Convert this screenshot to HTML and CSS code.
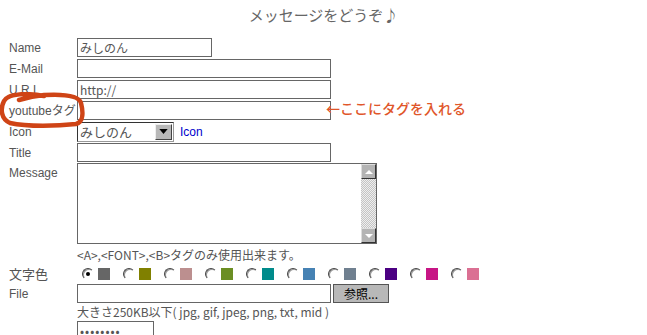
FILE: index.html
```html
<!DOCTYPE html>
<html lang="ja">
  <head>
    <meta charset="UTF-8" />
    <title>メッセージをどうぞ</title>
    <link rel="stylesheet" href="styles.css">
  </head>
  <body>
    <div class="page">
      <h1 class="title">メッセージをどうぞ♪</h1>

      <form class="form">
        <div class="row">
          <label class="label">Name</label>
          <input class="field field-name" type="text" value="みしのん" />
        </div>
        <div class="row">
          <label class="label">E-Mail</label>
          <input class="field" type="text" />
        </div>
        <div class="row">
          <label class="label">U R L</label>
          <input class="field" type="text" value="http://" />
        </div>
        <div class="row">
          <label class="label">youtubeタグ</label>
          <input class="field" type="text" />
        </div>
        <div class="row">
          <label class="label">Icon</label>
          <div class="select">
            <span class="select-text">みしのん</span>
            <span class="select-btn">
              <svg viewBox="0 0 10 6" width="9" height="5"><path d="M0 0h10L5 6z" fill="#000"/></svg>
            </span>
          </div>
          <a class="icon-link" href="#">Icon</a>
        </div>
        <div class="row">
          <label class="label">Title</label>
          <input class="field" type="text" />
        </div>
        <div class="row row-msg">
          <label class="label">Message</label>
          <div class="message">
            <textarea class="message-text"></textarea>
            <div class="scrollbar">
              <span class="sb-btn">
                <svg viewBox="0 0 8 4" width="8" height="4"><path d="M0 4h8L4 0z" fill="#fff"/></svg>
              </span>
              <span class="sb-track"></span>
              <span class="sb-btn">
                <svg viewBox="0 0 8 4" width="8" height="4"><path d="M0 0h8L4 4z" fill="#fff"/></svg>
              </span>
            </div>
          </div>
        </div>
        <div class="note">&lt;A&gt;,&lt;FONT&gt;,&lt;B&gt;タグのみ使用出来ます。</div>
        <div class="row row-color">
          <label class="label label-ja">文字色</label>
          <div class="colors">
            <span class="radio checked"></span><span class="swatch" style="background:#666666"></span>
            <span class="radio"></span><span class="swatch" style="background:#808000"></span>
            <span class="radio"></span><span class="swatch" style="background:#bc8f8f"></span>
            <span class="radio"></span><span class="swatch" style="background:#6b8e23"></span>
            <span class="radio"></span><span class="swatch" style="background:#008b8b"></span>
            <span class="radio"></span><span class="swatch" style="background:#4682b4"></span>
            <span class="radio"></span><span class="swatch" style="background:#708090"></span>
            <span class="radio"></span><span class="swatch" style="background:#4b0082"></span>
            <span class="radio"></span><span class="swatch" style="background:#c71585"></span>
            <span class="radio"></span><span class="swatch" style="background:#db7093"></span>
          </div>
        </div>
        <div class="row">
          <label class="label">File</label>
          <input class="field" type="text" />
          <button class="browse" type="button">参照...</button>
        </div>
        <div class="note note-size">大きさ250KB以下( jpg, gif, jpeg, png, txt, mid )</div>
        <div class="row">
          <span class="label"></span>
          <input class="field field-pass" type="password" value="aaaaaaaa" />
        </div>
      </form>

      <!-- annotation drawn over the screenshot -->
      <svg class="circle-mark" viewBox="0 0 86 36" width="86" height="36">
        <path d="M44 4 C 28 1, 8 1, 4 9 C 0 17, 1 27, 10 31 C 28 35, 58 34, 76 32 C 84 30, 83 19, 81 11 C 79 3, 62 2, 44 3 C 34 4, 26 6, 19 8"
              fill="none" stroke="#cf4416" stroke-width="4.5" stroke-linecap="round"/>
      </svg>
      <div class="callout">←ここにタグを入れる</div>
    </div>
  </body>
</html>
```

FILE: styles.css
```css
/* Reset */
* {
  box-sizing: border-box;
  margin: 0;
  padding: 0;
}
body {
  background: #fff;
  font-family: "Liberation Sans", "Noto Sans CJK JP", sans-serif;
  font-size: 12px;
  color: #555;
}

.page {
  position: relative;
  width: 647px;
  height: 335px;
  overflow: hidden;
}

/* Heading */
.title {
  font-family: "Noto Sans CJK JP", sans-serif;
  font-weight: normal;
  font-size: 15px;
  color: #666;
  text-align: center;
  line-height: 20px;
  padding-top: 5px;
  height: 37px;
}

/* Form rows */
.form {
  padding-left: 9px;
}
.row {
  display: flex;
  align-items: center;
  height: 21px;
}
.label {
  width: 68px;
  flex-shrink: 0;
  line-height: 14px;
}
.label-ja {
  font-family: "Noto Sans CJK JP", sans-serif;
  font-size: 13px;
}
.field {
  width: 254px;
  height: 19px;
  border: 1px solid #666;
  background: #fff;
  font-family: "Noto Sans CJK JP", sans-serif;
  font-size: 12px;
  color: #555;
  padding: 0 2px;
  outline: none;
}
.field-name {
  width: 135px;
}
.field-pass {
  width: 77px;
  letter-spacing: 1px;
}

/* Select box */
.select {
  display: flex;
  width: 97px;
  height: 20px;
  border: 1px solid #333;
  border-bottom-color: #999;
  border-right-color: #999;
  background: #fff;
}
.select-text {
  flex: 1;
  font-family: "Noto Sans CJK JP", sans-serif;
  font-size: 13px;
  line-height: 17px;
  padding-left: 2px;
}
.select-btn {
  width: 17px;
  margin: 1px;
  background: #b8b8b8;
  border: 1px solid #eee;
  border-right-color: #444;
  border-bottom-color: #444;
  display: flex;
  align-items: center;
  justify-content: center;
}
.icon-link {
  margin-left: 6px;
  color: #0000cc;
  text-decoration: none;
  font-size: 12px;
}

/* Message */
.row-msg {
  align-items: flex-start;
  height: 81px;
}
.row-msg .label {
  padding-top: 3px;
}
.message {
  display: flex;
  width: 300px;
  height: 81px;
  border: 1px solid #666;
  background: #fff;
}
.message-text {
  flex: 1;
  border: none;
  resize: none;
  outline: none;
}
.scrollbar {
  width: 16px;
  display: flex;
  flex-direction: column;
  border-left: 1px solid #fff;
}
.sb-btn {
  height: 15px;
  background: #b4b4b4;
  border: 1px solid #ddd;
  border-right-color: #333;
  border-bottom-color: #333;
  display: flex;
  align-items: center;
  justify-content: center;
}
.sb-track {
  flex: 1;
  background-color: #ddd;
  background-image: repeating-conic-gradient(#c4c4c4 0 25%, #eee 0 50%);
  background-size: 2px 2px;
}

/* Notes */
.note {
  margin-left: 68px;
  font-family: "Noto Sans CJK JP", sans-serif;
  font-size: 12px;
  line-height: 18px;
  height: 18px;
  margin-top: 2px;
}
.note-size {
  height: 16px;
  line-height: 16px;
  margin-top: 0;
}

/* Colour choices */
.row-color {
  height: 19px;
}
.colors {
  display: flex;
  align-items: center;
  padding-left: 5px;
}
.radio {
  width: 12px;
  height: 12px;
  border-radius: 50%;
  border: 1px solid #fff;
  border-top-color: #444;
  border-left-color: #444;
  box-shadow: inset 1px 1px 0 #999;
  background: #fff;
  margin-right: 4px;
  position: relative;
}
.radio.checked::after {
  content: "";
  position: absolute;
  left: 3px;
  top: 3px;
  width: 4px;
  height: 4px;
  border-radius: 50%;
  background: #000;
}
.swatch {
  width: 12px;
  height: 12px;
  margin-right: 13px;
}

/* Browse button */
.browse {
  margin-left: 2px;
  width: 56px;
  height: 19px;
  background: #b8b8b8;
  border: 1px solid #555;
  font-family: "Noto Sans CJK JP", sans-serif;
  font-size: 12px;
  color: #000;
  line-height: 16px;
}

/* Red annotation */
.circle-mark {
  position: absolute;
  left: 0;
  top: 92px;
}
.callout {
  position: absolute;
  left: 326px;
  top: 99px;
  font-family: "Noto Sans CJK JP", sans-serif;
  font-size: 14px;
  font-weight: 500;
  color: #e0562a;
  line-height: 18px;
}
```
